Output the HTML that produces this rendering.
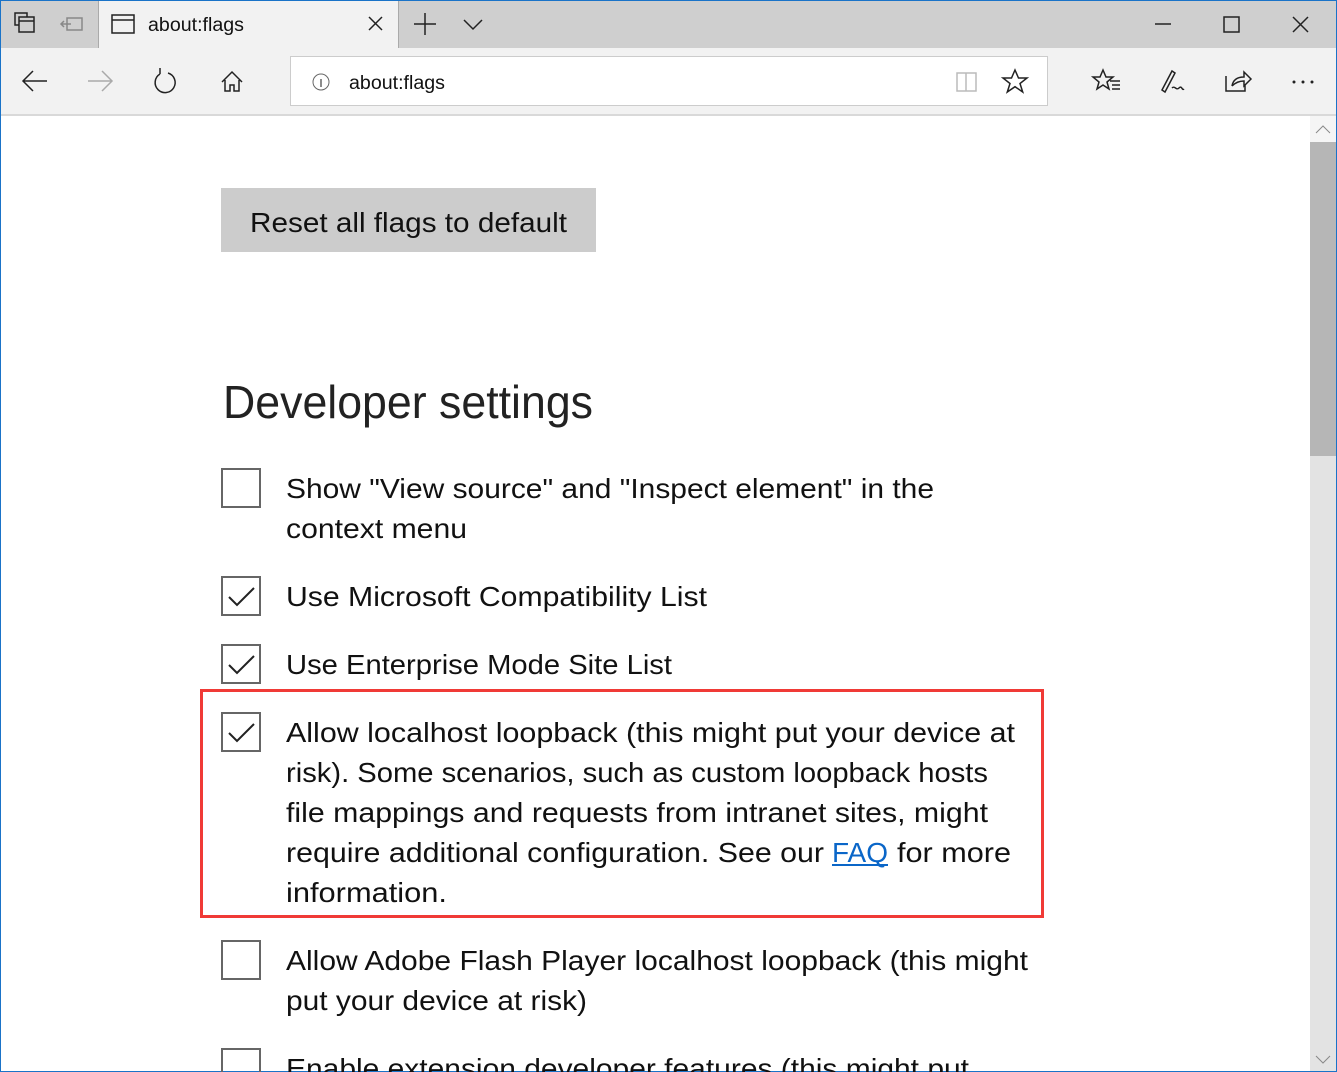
<!DOCTYPE html>
<html><head><meta charset="utf-8"><style>
html,body{margin:0;padding:0;}
body{width:1337px;height:1072px;position:relative;overflow:hidden;background:#fff;font-family:"Liberation Sans",sans-serif;}
.abs{position:absolute;}
</style></head><body>
<!-- tab bar -->
<div class="abs" style="left:0;top:0;width:1337px;height:48px;background:#cfcfcf;"></div>
<div class="abs" style="left:98px;top:0;width:301px;height:48px;background:#f2f2f2;border-left:1px solid #aaa;border-right:1px solid #aaa;box-sizing:border-box;"></div>
<!-- toolbar -->
<div class="abs" style="left:0;top:48px;width:1337px;height:66px;background:#f2f2f2;"></div>
<div class="abs" style="left:0;top:114px;width:1337px;height:2px;background:#d9d9d9;"></div>
<div class="abs" style="left:290px;top:56px;width:758px;height:50px;background:#fff;border:1px solid #ccc;box-sizing:border-box;"></div>
<!-- scrollbar -->
<div class="abs" style="left:1310px;top:116px;width:26px;height:956px;background:#e3e3e3;"></div>
<div class="abs" style="left:1310px;top:116px;width:26px;height:26px;background:#f5f5f5;"></div>
<div class="abs" style="left:1310px;top:142px;width:26px;height:314px;background:#b6b6b6;"></div>
<!-- window border -->
<div class="abs" style="left:0;top:0;width:1337px;height:1072px;border:1px solid #1a73c8;box-sizing:border-box;"></div>

<svg class="abs" style="left:0;top:0" width="1337" height="1072" xmlns="http://www.w3.org/2000/svg">
<g fill="none" stroke="#222" stroke-width="1.5">
 <!-- tab-manager icons -->
 <rect x="15" y="13" width="12" height="12"/><rect x="19" y="17" width="15" height="15" fill="#cfcfcf"/><line x1="19" y1="21" x2="34" y2="21"/>
 <g stroke="#888"><rect x="67" y="18" width="15" height="12"/><path d="M61 24h10M64 21l-3 3 3 3"/></g>
 <rect x="112" y="15" width="22" height="18"/><line x1="112" y1="20" x2="134" y2="20"/>
 <path d="M369 17l13 13M382 17l-13 13"/>
 <path d="M425 13v22M414 24h22"/>
 <path d="M464 20l9 9 9-9"/>
 <path d="M1155 24h16"/><rect x="1224" y="17" width="15" height="15"/><path d="M1293 17l15 15M1308 17l-15 15"/>
 <!-- nav -->
 <path d="M23 81h24M33 71l-10 10 10 10"/>
 <path stroke="#aaa" d="M88 81h24M102 71l10 10-10 10"/>
 <path d="M160 74a10 10 0 1 0 8 -1M160 74v-6"/>
 <path d="M222 82l10-10 10 10M225 80v11h5v-6h4v6h5v-11"/>
 <circle cx="321" cy="82" r="8" stroke="#666" stroke-width="1"/><path d="M321 79v8" stroke="#666"/>
 <g stroke="#bbb"><path d="M957 73h9v18h-9zM966 73h10v18h-10z"/></g>
 <path d="M1015 70l3.5 8h8.5l-7 5.5 2.7 8.5-7.7-5.3-7.7 5.3 2.7-8.5-7-5.5h8.5z"/>
 <path d="M1103 70l3 7h7l-6 5 2 7-6-4-6 4 2-7-6-5h7zM1110 81h10M1112 85h8M1112 89h8"/>
 <path d="M1162 90l10-19 3 2-10 19zM1172 88c3-3 4 3 7 0s3 3 5 1"/>
 <path d="M1226 76v15h19v-6M1232 86c1-6 5-9 12-9v-5l7 7-7 7v-5c-5 0-9 2-12 5"/>
</g>
<g fill="#222"><circle cx="1294" cy="82" r="1.5"/><circle cx="1303" cy="82" r="1.5"/><circle cx="1312" cy="82" r="1.5"/></g>
<path d="M1316 133l7-7 7 7" fill="none" stroke="#888" stroke-width="1"/>
<path d="M1316 1056l7 7 7-7" fill="none" stroke="#888" stroke-width="1"/>
<text x="148" y="31" font-size="19" fill="#111" font-family="Liberation Sans, sans-serif" textLength="96" lengthAdjust="spacingAndGlyphs">about:flags</text>
<text x="349" y="89" font-size="19" fill="#111" font-family="Liberation Sans, sans-serif" textLength="96" lengthAdjust="spacingAndGlyphs">about:flags</text>

<!-- button -->
<rect x="221" y="188" width="375" height="64" fill="#cccccc"/>
<g font-family="Liberation Sans, sans-serif" fill="#111" font-size="28">
<text x="250" y="232" textLength="317" lengthAdjust="spacingAndGlyphs">Reset all flags to default</text>
<text x="223" y="418" font-size="46" fill="#222" textLength="370" lengthAdjust="spacingAndGlyphs">Developer settings</text>
<text x="286" y="498" textLength="648" lengthAdjust="spacingAndGlyphs">Show "View source" and "Inspect element" in the</text>
<text x="286" y="538" textLength="181" lengthAdjust="spacingAndGlyphs">context menu</text>
<text x="286" y="606" textLength="421" lengthAdjust="spacingAndGlyphs">Use Microsoft Compatibility List</text>
<text x="286" y="674" textLength="386" lengthAdjust="spacingAndGlyphs">Use Enterprise Mode Site List</text>
<text x="286" y="742" textLength="729" lengthAdjust="spacingAndGlyphs">Allow localhost loopback (this might put your device at</text>
<text x="286" y="782" textLength="702" lengthAdjust="spacingAndGlyphs">risk). Some scenarios, such as custom loopback hosts</text>
<text x="286" y="822" textLength="702" lengthAdjust="spacingAndGlyphs">file mappings and requests from intranet sites, might</text>
<text x="286" y="862" textLength="538" lengthAdjust="spacingAndGlyphs">require additional configuration. See our</text>
<text x="832" y="862" fill="#0a66c8" textLength="56" lengthAdjust="spacingAndGlyphs">FAQ</text>
<text x="897" y="862" textLength="114" lengthAdjust="spacingAndGlyphs">for more</text>
<text x="286" y="902" textLength="161" lengthAdjust="spacingAndGlyphs">information.</text>
<text x="286" y="970" textLength="742" lengthAdjust="spacingAndGlyphs">Allow Adobe Flash Player localhost loopback (this might</text>
<text x="286" y="1010" textLength="301" lengthAdjust="spacingAndGlyphs">put your device at risk)</text>
<text x="286" y="1078" textLength="683" lengthAdjust="spacingAndGlyphs">Enable extension developer features (this might put</text>
</g>
<rect x="832" y="864" width="56" height="2" fill="#0a66c8"/>
<!-- checkboxes -->
<g fill="none" stroke="#666" stroke-width="2">
<rect x="222" y="469" width="38" height="38"/>
<rect x="222" y="577" width="38" height="38"/>
<rect x="222" y="645" width="38" height="38"/>
<rect x="222" y="713" width="38" height="38"/>
<rect x="222" y="941" width="38" height="38"/>
<rect x="222" y="1049" width="38" height="38"/>
</g>
<g fill="none" stroke="#222" stroke-width="2">
<path d="M229 597l8 8 17-17"/>
<path d="M229 665l8 8 17-17"/>
<path d="M229 733l8 8 17-17"/>
</g>
<rect x="201.5" y="690.5" width="841" height="226" fill="none" stroke="#f03a36" stroke-width="3"/>
</svg>
</body></html>
